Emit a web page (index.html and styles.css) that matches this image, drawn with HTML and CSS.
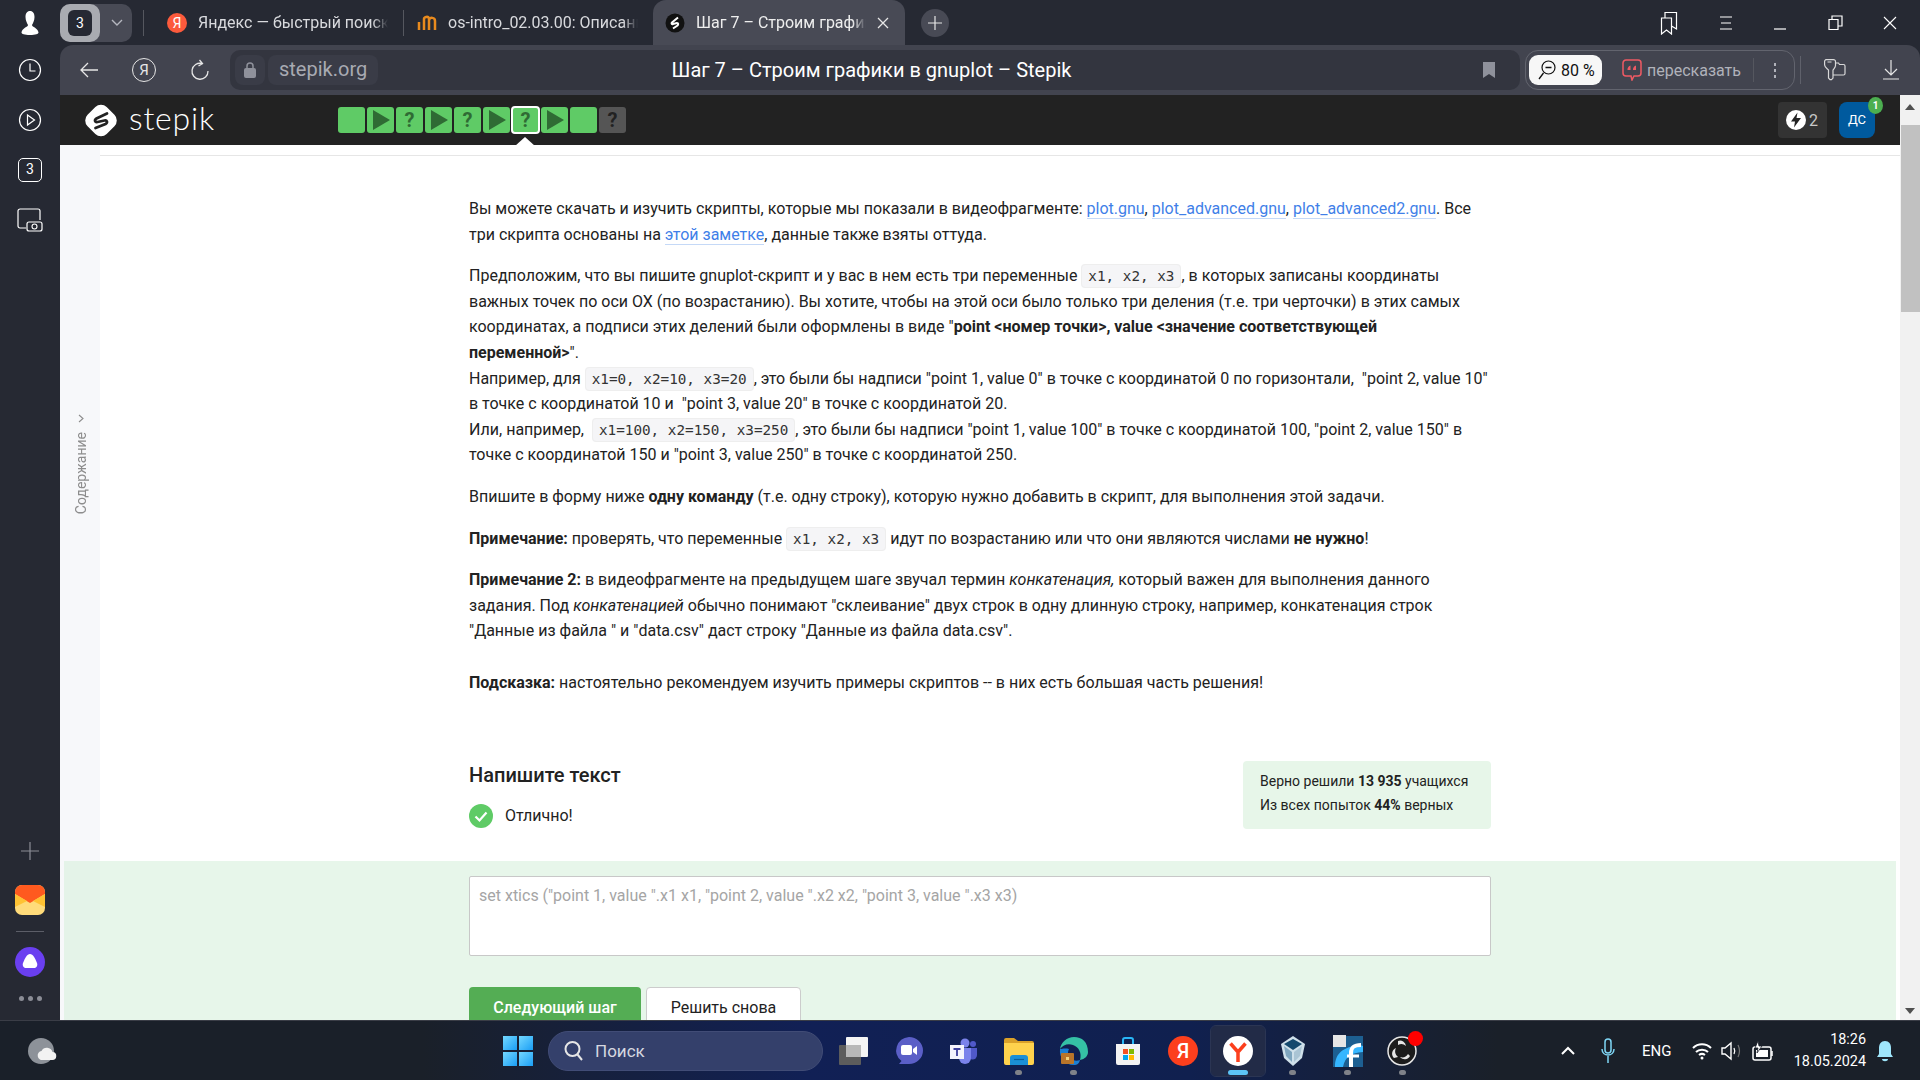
FILE: index.html
```html
<!DOCTYPE html>
<html lang="ru">
<head>
    <meta charset="UTF-8">
    <title>Шаг 7 – Строим графики в gnuplot – Stepik</title>
    <link rel="stylesheet" href="styles.css">
</head>
<body>
    <!-- Tabs -->
    <div class="tabbar">
        <div class="profile">
            <svg width="20" height="26" viewBox="0 0 20 26"><path d="M10 1c3 0 4.500 2.500 4.500 6 0 3.500-1.500 6-2.500 8 0 2 6 3 6.500 7.500 0 1.500-3 2.500-8.500 2.500s-8.500-1-8.500-2.500C2 18 8 17 8 15 7 13 5.500 10.500 5.500 7 5.500 3.500 7 1 10 1z" fill="#fff"/></svg>
        </div>
        <div class="tab-group">
            <span class="tab-group-num"><b>3</b></span>
            <svg width="12" height="8" viewBox="0 0 12 8"><path d="M1 1l5 5 5-5" fill="none" stroke="#b5b7bf" stroke-width="1.400"/></svg>
        </div>
        <span class="tab-sep first"></span>
        <div class="tab">
            <span class="fav-ya">Я</span>
            <span class="tab-title">Яндекс — быстрый поиск</span>
        </div>
        <span class="tab-sep"></span>
        <div class="tab">
            <svg class="fav" width="20" height="16" viewBox="0 0 20 16"><path d="M2 15V7M7 15V4c0-2 4-3 5-1l0 12M12 5c1-3 6-3 6 1v9" fill="none" stroke="#e88a1e" stroke-width="2.500"/></svg>
            <span class="tab-title">os-intro_02.03.00: Описание</span>
        </div>
        <div class="tab active">
            <svg class="fav" width="20" height="20" viewBox="0 0 20 20"><circle cx="10" cy="10" r="9.500" fill="#111"/><path d="M13 4.500L7 9.500c-1 1 0 2 1 1.500l4-1c1.500 0 1.500 1.500.5 2.500L8 15.500" fill="none" stroke="#fff" stroke-width="2"/></svg>
            <span class="tab-title">Шаг 7 – Строим графики в gnuplot</span>
            <svg width="12" height="12" viewBox="0 0 12 12"><path d="M1 1l10 10M11 1L1 11" stroke="#e6e6e6" stroke-width="1.300"/></svg>
        </div>
        <span class="tab-new">
            <svg width="14" height="14" viewBox="0 0 14 14"><path d="M7 0v14M0 7h14" stroke="#e6e6e6" stroke-width="1.200"/></svg>
        </span>
        <div class="win-controls">
            <svg width="18" height="24" viewBox="0 0 18 24"><path d="M1.500 7h10v16l-5-4-5 4zM5 7V1.500h11.500V18L11.500 15" fill="none" stroke="#fff" stroke-width="1.200"/></svg>
            <svg width="14" height="14" viewBox="0 0 14 14"><path d="M1 1h12M2 7h10M1 13h12" stroke="#fff" stroke-width="1.200"/></svg>
            <svg width="14" height="14" viewBox="0 0 14 14"><path d="M1 13h12" stroke="#fff" stroke-width="1.200"/></svg>
            <svg width="15" height="15" viewBox="0 0 15 15"><path d="M1 4.500h9v10H1zM4 4.500V1h10v10h-4" fill="none" stroke="#fff" stroke-width="1.200"/></svg>
            <svg width="14" height="14" viewBox="0 0 14 14"><path d="M1 1l12 12M13 1L1 13" stroke="#fff" stroke-width="1.100"/></svg>
        </div>
    </div>

    <div class="browser">
        <!-- Sidebar of the browser -->
        <aside class="sidebar">
            <div class="side-top">
                <svg width="24" height="24" viewBox="0 0 24 24"><circle cx="12" cy="12" r="10.500" fill="none" stroke="#fff" stroke-width="1.200"/><path d="M12 5.500V13h5.500" fill="none" stroke="#fff" stroke-width="1.200"/></svg>
                <svg width="24" height="24" viewBox="0 0 24 24"><circle cx="12" cy="12" r="10.500" fill="none" stroke="#fff" stroke-width="1.200"/><path d="M9.500 7l7 5-7 5z" fill="none" stroke="#fff" stroke-width="1.200"/></svg>
                <span class="side-three">3</span>
                <svg width="26" height="24" viewBox="0 0 26 24"><path d="M9 20H3a2 2 0 0 1-2-2V3a2 2 0 0 1 2-2h18a2 2 0 0 1 2 2v9" fill="none" stroke="#fff" stroke-width="1.200"/><rect x="10" y="14" width="15" height="9" rx="2" fill="none" stroke="#fff" stroke-width="1.200"/><circle cx="17.500" cy="18.500" r="2.500" fill="none" stroke="#fff" stroke-width="1.100"/></svg>
            </div>
            <div class="side-bottom">
                <svg width="20" height="20" viewBox="0 0 20 20"><path d="M10 1v18M1 10h18" stroke="#8b8d96" stroke-width="1.200"/></svg>
                <svg class="side-mail" width="30" height="30" viewBox="0 0 30 30"><rect width="30" height="30" rx="7" fill="#ffdb7a"/><path d="M0 7a7 7 0 0 1 7-7h16a7 7 0 0 1 7 7v2l-15 9L0 9z" fill="#ff5a1f"/><path d="M0 9l12 7-12 6zM30 9l-12 7 12 6z" fill="#ffc233"/></svg>
                <span class="side-line"></span>
                <svg width="30" height="30" viewBox="0 0 30 30"><circle cx="15" cy="15" r="15" fill="#6a3ff0"/><path d="M15 7c3 0 5 4 7 9 1 3-1 5-3 5h-8c-2 0-4-2-3-5 2-5 4-9 7-9z" fill="#fff"/></svg>
                <span class="side-dots"><i></i><i></i><i></i></span>
            </div>
        </aside>

        <div class="window">
            <!-- Address bar -->
            <div class="addressbar">
                <div class="nav-icons">
                    <svg width="18" height="16" viewBox="0 0 18 16"><path d="M8 1L1 8l7 7M1 8h17" fill="none" stroke="#e6e6e6" stroke-width="1.300"/></svg>
                    <span class="ya-circle">Я</span>
                    <svg width="20" height="22" viewBox="0 0 20 22"><path d="M12 4.500A8 8 0 1 0 18 12M9.500 1l3 3.500-4 2.500" fill="none" stroke="#e6e6e6" stroke-width="1.300"/></svg>
                </div>
                <div class="url-field">
                    <div class="url-left">
                        <span class="url-chip lock">
                            <svg width="12" height="16" viewBox="0 0 12 16"><rect y="6" width="12" height="10" rx="2" fill="#8f919b"/><path d="M3 7V4a3 3 0 0 1 6 0v3" fill="none" stroke="#8f919b" stroke-width="1.500"/></svg>
                        </span>
                        <span class="url-chip">stepik.org</span>
                    </div>
                    <span class="page-title">Шаг 7 – Строим графики в gnuplot – Stepik</span>
                    <svg class="bookmark" width="14" height="18" viewBox="0 0 14 18"><path d="M1 1h12v16l-6-4-6 4z" fill="#8f919b"/></svg>
                </div>
                <div class="tools">
                    <span class="zoom-pill">
                        <svg width="18" height="20" viewBox="0 0 18 20"><circle cx="10.500" cy="7.500" r="6.500" fill="none" stroke="#111" stroke-width="1.200"/><path d="M7.500 7.500h6M5.500 13L1 19" stroke="#111" stroke-width="1.300"/></svg>
                        80 %
                    </span>
                    <span class="retell">
                        <svg width="20" height="22" viewBox="0 0 20 22"><path d="M4 1h12a3 3 0 0 1 3 3v10a3 3 0 0 1-3 3h-4l-2 4-1-4H4a3 3 0 0 1-3-3V4a3 3 0 0 1 3-3z" fill="none" stroke="#ef5a64" stroke-width="1.500"/><path d="M5.500 11c0-2 .5-3.500 3-4.500v4.500zM11 11c0-2 .5-3.500 3-4.500v4.500z" fill="#ef5a64"/></svg>
                        пересказать
                    </span>
                    <span class="tools-sep"></span>
                    <span class="tools-more"><i></i><i></i><i></i></span>
                </div>
                <span class="bar-sep"></span>
                <svg class="bar-key" width="22" height="22" viewBox="0 0 22 22"><path d="M2.500.6h7a2 2 0 0 1 2 2v4c0 2-1.500 3-2.500 4.500v8l-1.500 1.500H6L4.500 19v-8C3 9.500.6 8 .6 6V2.500a2 2 0 0 1 2-2zM3.500 3h4M11.500 4h3l1 1.500h4a1.500 1.500 0 0 1 1.500 1.500v7.500a1.500 1.500 0 0 1-1.500 1.500H9" fill="none" stroke="#d9d9d9" stroke-width="1.200"/></svg>
                <svg class="bar-download" width="16" height="20" viewBox="0 0 16 20"><path d="M8 0v15M2 9l6 6 6-6M0 19h16" fill="none" stroke="#e6e6e6" stroke-width="1.200"/></svg>
            </div>

            <div class="site">
                <div class="site-main">
                    <!-- Stepik header -->
                    <header class="st-header">
                        <div class="st-logo">
                            <svg width="32" height="33" viewBox="0 0 32 33"><rect x="2.500" y="3" width="27" height="27" rx="8" fill="#fff" transform="rotate(45 16 16.500)"/><path d="M22 9.500L11.500 14.500c-2.500 1.500-1.500 4 1 3.500l7-1.500c2.500-.5 3.500 2 1 3.500L10.500 24" fill="none" stroke="#222" stroke-width="2.800" stroke-linecap="round"/></svg>
                            <span class="st-logo-name">stepik</span>
                        </div>
                        <nav class="steps">
                            <span class="step"></span>
                            <span class="step"><i class="play"></i></span>
                            <span class="step">?</span>
                            <span class="step"><i class="play"></i></span>
                            <span class="step">?</span>
                            <span class="step"><i class="play"></i></span>
                            <span class="step current">?</span>
                            <span class="step"><i class="play"></i></span>
                            <span class="step"></span>
                            <span class="step todo">?</span>
                        </nav>
                        <div class="st-user">
                            <span class="streak">
                                <svg width="20" height="20" viewBox="0 0 20 20"><circle cx="10" cy="10" r="10" fill="#fff"/><path d="M11.500 2.500L5 11.500h4l-1 6 7-9.500h-4.500z" fill="#222"/></svg>
                                2
                            </span>
                            <span class="avatar">ДС<b class="avatar-badge">1</b></span>
                        </div>
                    </header>

                    <div class="viewport">
                        <div class="toc-strip">
                            <span class="toc-label">Содержание</span>
                            <svg class="toc-arrow" width="6" height="9" viewBox="0 0 6 9"><path d="M1 1l4 3.500L1 8" fill="none" stroke="#8d8d8d" stroke-width="1.100"/></svg>
                        </div>

                        <main class="lesson">
                            <article class="lesson-text">
                                <p>Вы можете скачать и изучить скрипты, которые мы показали в видеофрагменте: <a href="#">plot.gnu</a>, <a href="#">plot_advanced.gnu</a>, <a href="#">plot_advanced2.gnu</a>. Все три скрипта основаны на <a href="#">этой заметке</a>, данные также взяты оттуда.</p>
                                <p>Предположим, что вы пишите gnuplot-скрипт и у вас в нем есть три переменные <code>x1, x2, x3</code>, в которых записаны координаты важных точек по оси ОХ (по возрастанию). Вы хотите, чтобы на этой оси было только три деления (т.е. три черточки) в этих самых координатах, а подписи этих делений были оформлены в виде "<b>point &lt;номер точки&gt;, value &lt;значение соответствующей переменной&gt;</b>".<br>
                                Например, для <code>x1=0, x2=10, x3=20</code>, это были бы надписи "point 1, value 0" в точке с координатой 0 по горизонтали,&nbsp; "point 2, value 10" в точке с координатой 10 и&nbsp; "point 3, value 20" в точке с координатой 20.<br>
                                Или, например,&nbsp; <code>x1=100, x2=150, x3=250</code>, это были бы надписи "point 1, value 100" в точке с координатой 100, "point 2, value 150" в точке с координатой 150 и "point 3, value 250" в точке с координатой 250.</p>
                                <p>Впишите в форму ниже <b>одну команду</b> (т.е. одну строку), которую нужно добавить в скрипт, для выполнения этой задачи.</p>
                                <p><b>Примечание:</b> проверять, что переменные <code>x1, x2, x3</code> идут по возрастанию или что они являются числами <b>не нужно</b>!</p>
                                <p class="note-two"><b>Примечание 2:</b> в видеофрагменте на предыдущем шаге звучал термин <i>конкатенация,</i> который важен для выполнения данного задания. Под <i>конкатенацией</i> обычно понимают "склеивание" двух строк в одну длинную строку, например, конкатенация строк "Данные из файла " и "data.csv" даст строку "Данные из файла data.csv".</p>
                                <p><b>Подсказка:</b> настоятельно рекомендуем изучить примеры скриптов -- в них есть большая часть решения!</p>
                            </article>

                            <section class="quiz-head">
                                <div>
                                    <h2>Напишите текст</h2>
                                    <div class="quiz-ok">
                                        <svg width="24" height="24" viewBox="0 0 24 24"><circle cx="12" cy="12" r="12" fill="#5fcb66"/><path d="M6.500 12.500l4 4 7-8" fill="none" stroke="#fff" stroke-width="2.200"/></svg>
                                        Отлично!
                                    </div>
                                </div>
                                <div class="quiz-stats">
                                    <div>Верно решили <b>13 935</b> учащихся</div>
                                    <div>Из всех попыток <b>44%</b> верных</div>
                                </div>
                            </section>

                            <section class="answer">
                                <div class="answer-box">set xtics ("point 1, value ".x1 x1, "point 2, value ".x2 x2, "point 3, value ".x3 x3)</div>
                                <div class="answer-actions">
                                    <button class="btn btn-next">Следующий шаг</button>
                                    <button class="btn btn-again">Решить снова</button>
                                </div>
                            </section>
                        </main>
                    </div>
                </div>

                <div class="scrollbar">
                    <i class="arrow-up"></i>
                    <span class="thumb"></span>
                    <i class="arrow-down"></i>
                </div>
            </div>
        </div>
    </div>

    <!-- Windows taskbar -->
    <footer class="taskbar">
        <svg class="weather" width="30" height="26" viewBox="0 0 30 26"><circle cx="14" cy="13" r="13" fill="#8d9299"/><path d="M16 22h9a4 4 0 0 0 .5-8 6 6 0 0 0-11-1 4.500 4.500 0 0 0 1.500 9z" fill="#f2f2f2"/></svg>
        <div class="win-logo"><i></i><i></i><i></i><i></i></div>
        <div class="search">
            <svg width="20" height="22" viewBox="0 0 20 22"><circle cx="8.500" cy="9" r="7" fill="none" stroke="#e6e6e6" stroke-width="2"/><path d="M13.500 14.500L18 20" stroke="#e6e6e6" stroke-width="2"/></svg>
            Поиск
        </div>
        <div class="apps">
            <span class="app">
                <svg width="30" height="30" viewBox="0 0 30 30"><rect y="9" width="22" height="20" rx="1" fill="#5c5c5c"/><rect x="7" y="1" width="22" height="20" rx="1" fill="#f4f4f4"/><rect x="7" y="9" width="15" height="12" fill="#b8b8b8"/></svg>
            </span>
            <span class="app">
                <svg width="30" height="30" viewBox="0 0 30 30"><path d="M15 1a14 13.500 0 0 1 0 27H5l2.500-3A14 13.500 0 0 1 15 1z" fill="#5b5fc7"/><rect x="7" y="9" width="11" height="10" rx="2" fill="#fff"/><path d="M19 13l4-3v9l-4-3z" fill="#fff"/></svg>
            </span>
            <span class="app">
                <svg width="28" height="26" viewBox="0 0 28 26"><circle cx="15" cy="5" r="4.500" fill="#7b83eb"/><circle cx="23" cy="6" r="3" fill="#5059c9"/><path d="M18 10h9v7a4.500 4.500 0 0 1-9 0z" fill="#5059c9"/><path d="M9 10h12v10a6 6 0 0 1-12 0z" fill="#7b83eb"/><rect y="7" width="14" height="14" fill="#f4f4fc"/><path d="M3.500 11h7M7 11v7" stroke="#3d3f9c" stroke-width="1.800"/></svg>
            </span>
            <span class="app dot">
                <svg width="30" height="28" viewBox="0 0 30 28"><path d="M0 3a2 2 0 0 1 2-2h8l4 3h14a2 2 0 0 1 2 2v4H0z" fill="#dba129"/><path d="M0 6h30v20a2 2 0 0 1-2 2H2a2 2 0 0 1-2-2z" fill="#ffd24d"/><path d="M6 21a3 3 0 0 1 3-3h12a3 3 0 0 1 3 3v7H6z" fill="#1a8fd6"/><path d="M10 22.500h10" stroke="#0b5f9c" stroke-width="1.200"/></svg>
            </span>
            <span class="app dot">
                <svg width="30" height="30" viewBox="0 0 30 30"><path d="M29 16C29 6 23 1 15 1 8 1 2 6 1 13c3-4 8-6 13-4 6 2 9 8 7 15 5-1 8-4 8-8z" fill="#35c1a5"/><path d="M1 13c-1 9 5 16 14 16 3 0 5-1 6-5-3 1-6 1-9-1-3-2-4-6-2-10-4-1-7 0-9 0z" fill="#1a7fd4"/><rect x="2" y="17" width="13" height="11" rx="1" fill="#b9752a"/><rect x="7" y="21" width="3" height="3" fill="#f3d27a"/></svg>
            </span>
            <span class="app">
                <svg width="30" height="30" viewBox="0 0 30 30"><path d="M3 8h24v19a2 2 0 0 1-2 2H5a2 2 0 0 1-2-2z" fill="#f3f3f3"/><path d="M10 8V4a2 2 0 0 1 2-2h6a2 2 0 0 1 2 2v4" fill="none" stroke="#29b6f6" stroke-width="2"/><rect x="10" y="13" width="5" height="5" fill="#f25022"/><rect x="16" y="13" width="5" height="5" fill="#7fba00"/><rect x="10" y="19" width="5" height="5" fill="#00a4ef"/><rect x="16" y="19" width="5" height="5" fill="#ffb900"/></svg>
            </span>
            <span class="app"><span class="app-ya">Я</span></span>
            <span class="app app-active">
                <svg width="30" height="30" viewBox="0 0 30 30"><circle cx="15" cy="15" r="15" fill="#fff"/><path d="M7.500 7.500L15 16l7.500-8.500M15 16v10" fill="none" stroke="#fc3f1d" stroke-width="3.500"/></svg>
            </span>
            <span class="app dot">
                <svg width="26" height="32" viewBox="0 0 26 32"><path d="M13 1L25 9l-3 14-9 8-9-8L1 9z" fill="#cfe0ea"/><path d="M13 4L22 9l-9 6-9-6z" fill="#14496e"/><path d="M4 11l8 6v10L6 21z" fill="#7fa6bf"/><path d="M22 11l-8 6v10l6-6z" fill="#aac4d4"/></svg>
            </span>
            <span class="app dot">
                <svg width="30" height="32" viewBox="0 0 30 32"><rect y="1" width="30" height="31" fill="#1d5f91"/><rect width="13" height="12" fill="#e6e6e6"/><path d="M2 32c0-14 8-20 25-22l3 1v6C18 18 12 22 10 32z" fill="#35b6ff"/><path d="M18 32V18c0-6 3-8 10-8" fill="none" stroke="#fff" stroke-width="4"/><path d="M14 21h12" stroke="#fff" stroke-width="3"/></svg>
            </span>
            <span class="app dot app-obs">
                <svg width="30" height="30" viewBox="0 0 30 30"><circle cx="15" cy="15" r="14" fill="#1c1c1c" stroke="#e6e6e6" stroke-width="1.500"/><path d="M11 5a6 6 0 0 1 8 5 7 7 0 0 0-8-1zM7 22a6 6 0 0 1 2-10 7 7 0 0 0 2 9zM23 20a6 6 0 0 1-10 1 7 7 0 0 0 8-3z" fill="#e6e6e6"/></svg>
                <i class="obs-badge"></i>
            </span>
        </div>
        <div class="tray">
            <svg class="tray-chevron" width="16" height="10" viewBox="0 0 16 10"><path d="M2 8l6-6 6 6" fill="none" stroke="#fff" stroke-width="2"/></svg>
            <svg class="tray-mic" width="14" height="26" viewBox="0 0 14 26"><rect x="4" y="1" width="6" height="14" rx="3" fill="none" stroke="#7fd6f5" stroke-width="1.500"/><path d="M1 11c0 8 12 8 12 0M7 18v7" fill="none" stroke="#7fd6f5" stroke-width="1.500"/></svg>
            <span class="tray-lang">ENG</span>
            <svg class="tray-wifi" width="20" height="18" viewBox="0 0 20 18"><path d="M1 6c5-5 13-5 18 0M4 10c3-3 9-3 12 0M7 13c2-1.500 4-1.500 6 0" fill="none" stroke="#fff" stroke-width="2"/><circle cx="10" cy="16" r="1.500" fill="#fff"/></svg>
            <svg class="tray-sound" width="22" height="20" viewBox="0 0 22 20"><path d="M1 7h3l6-5v16l-6-5H1z" fill="none" stroke="#fff" stroke-width="1.400"/><path d="M13 7c1 2 1 4 0 6" fill="none" stroke="#fff" stroke-width="1.300"/><path d="M17 4c2 4 2 8 0 12" fill="none" stroke="#777" stroke-width="1.200"/></svg>
            <svg class="tray-battery" width="22" height="22" viewBox="0 0 22 22"><rect x="1" y="7" width="18" height="13" rx="2" fill="none" stroke="#fff" stroke-width="1.500"/><rect x="4" y="10" width="12" height="7" fill="#fff"/><path d="M20 11v5" stroke="#fff" stroke-width="1.500"/><path d="M6 1L3 8h3l-1 5 5-7H7z" fill="#fff" stroke="#1a2029" stroke-width=".8"/></svg>
            <div class="clock">
                <div>18:26</div>
                <div>18.05.2024</div>
            </div>
            <svg class="tray-bell" width="18" height="22" viewBox="0 0 18 22"><path d="M9 1c4 0 6 3 6 7v6l2 3H1l2-3V8c0-4 2-7 6-7z" fill="#9fe6fb"/><path d="M6 19h6c0 3-6 3-6 0z" fill="#9fe6fb"/></svg>
        </div>
    </footer>
</body>
</html>
```

FILE: styles.css
```css
* {
    box-sizing: border-box;
}
html, body {
    height: 100%;
}
body {
    margin: 0;
    height: 1080px;
    width: 1920px;
    overflow: hidden;
    display: flex;
    flex-direction: column;
    background: #262933;
    font-family: Roboto, "Liberation Sans", sans-serif;
    color: #222;
}
svg {
    display: block;
    flex: none;
}

/* tabs */
.tabbar {
    height: 45px;
    flex: none;
    display: flex;
    align-items: center;
    color: #d9dade;
    font-size: 16px;
}
.profile {
    width: 60px;
    display: flex;
    justify-content: center;
}
.tab-group {
    width: 72px;
    height: 38px;
    border-radius: 10px;
    background: #484a55;
    display: flex;
    align-items: center;
    gap: 11px;
}
.tab-group-num {
    width: 40px;
    height: 38px;
    border-radius: 10px;
    background: #a9abb1;
    display: flex;
    align-items: center;
    justify-content: center;
}
.tab-group-num b {
    width: 24px;
    height: 26px;
    border-radius: 6px;
    background: #262933;
    color: #fff;
    font-size: 14px;
    font-weight: 400;
    line-height: 26px;
    text-align: center;
}
.tab-sep {
    width: 1px;
    height: 26px;
    flex: none;
    background: #55575f;
}
.tab-sep.first {
    margin: 0 10px 0 11px;
}
.tab {
    display: flex;
    align-items: center;
    flex: none;
    height: 45px;
    width: 249px;
    padding: 0 15px 0 13px;
    gap: 11px;
    overflow: hidden;
}
.tab-title {
    flex: 1;
    white-space: nowrap;
    overflow: hidden;
    -webkit-mask-image: linear-gradient(90deg, #000 92%, transparent);
    mask-image: linear-gradient(90deg, #000 92%, transparent);
}
.fav-ya {
    width: 20px;
    height: 20px;
    flex: none;
    border-radius: 50%;
    background: #fc5a3c;
    color: #fff;
    font-size: 14px;
    line-height: 20px;
    text-align: center;
}
.tab.active {
    width: 252px;
    padding: 0 16px 0 12px;
    border-radius: 13px 13px 0 0;
    background: #484a55;
    color: #eee;
}
.tab-new {
    width: 28px;
    height: 28px;
    margin-left: 16px;
    border-radius: 50%;
    background: #484a55;
    display: flex;
    align-items: center;
    justify-content: center;
}
.win-controls {
    margin-left: auto;
    width: 260px;
    padding-right: 23px;
    display: flex;
    align-items: center;
    justify-content: space-between;
}

.browser {
    flex: 1;
    min-height: 0;
    display: flex;
}

/* browser sidebar */
.sidebar {
    width: 60px;
    flex: none;
    display: flex;
    flex-direction: column;
    justify-content: space-between;
    align-items: center;
    padding: 13px 0 19px;
}
.side-top {
    display: flex;
    flex-direction: column;
    align-items: center;
    gap: 26px;
}
.side-three {
    width: 24px;
    height: 24px;
    border: 1.2px solid #fff;
    border-radius: 5px;
    color: #fff;
    font-size: 14px;
    line-height: 21px;
    text-align: center;
}
.side-bottom {
    display: flex;
    flex-direction: column;
    align-items: center;
}
.side-mail {
    margin-top: 24px;
}
.side-line {
    width: 28px;
    height: 1px;
    background: #5c5e68;
    margin: 16px 0 15px;
}
.side-dots {
    display: flex;
    gap: 4px;
    margin-top: 19px;
}
.side-dots i {
    width: 5px;
    height: 5px;
    border-radius: 50%;
    background: #8b8d96;
}

.window {
    flex: 1;
    min-width: 0;
    display: flex;
    flex-direction: column;
}

/* address bar */
.addressbar {
    height: 50px;
    flex: none;
    display: flex;
    align-items: center;
    background: #42444f;
    border-radius: 13px 13px 0 0;
}
.nav-icons {
    width: 170px;
    padding: 0 20px;
    display: flex;
    align-items: center;
    justify-content: space-between;
}
.ya-circle {
    width: 24px;
    height: 24px;
    border: 1.2px solid #e6e6e6;
    border-radius: 50%;
    color: #e6e6e6;
    font-size: 15px;
    line-height: 22px;
    text-align: center;
}
.url-field {
    width: 1290px;
    height: 40px;
    padding: 0 12px 0 5px;
    display: grid;
    grid-template-columns: 1fr auto 1fr;
    align-items: center;
    background: #33353f;
    border-radius: 10px;
}
.url-left {
    display: flex;
    align-items: center;
    gap: 3px;
}
.url-chip {
    height: 30px;
    padding: 0 11px;
    border-radius: 8px;
    background: #3a3c47;
    color: #a8aab2;
    font-size: 20px;
    line-height: 29px;
}
.url-chip.lock {
    width: 30px;
    padding: 0;
    display: flex;
    align-items: center;
    justify-content: center;
}
.page-title {
    color: #fff;
    font-size: 20px;
    white-space: nowrap;
}
.bookmark {
    justify-self: end;
    margin-right: 12px;
}
.tools {
    width: 270px;
    height: 40px;
    margin-left: 5px;
    padding: 0 12px 0 3px;
    border: 1px solid #62646e;
    border-radius: 13px;
    display: flex;
    align-items: center;
    color: #b0b2ba;
    font-size: 16px;
}
.zoom-pill {
    width: 73px;
    height: 30px;
    padding-left: 9px;
    border-radius: 9px;
    background: #f7f7f7;
    color: #111;
    display: flex;
    align-items: center;
    gap: 5px;
}
.retell {
    display: flex;
    align-items: center;
    gap: 5px;
    margin-left: 20px;
}
.tools-sep {
    width: 1px;
    height: 24px;
    background: #55575f;
    margin-left: 12px;
}
.tools-more {
    display: flex;
    flex-direction: column;
    gap: 3px;
    margin-left: 20px;
}
.tools-more i {
    width: 2px;
    height: 3px;
    background: #b0b2ba;
}
.bar-sep {
    width: 1px;
    height: 28px;
    margin-left: 5px;
    background: #5f616b;
}
.bar-key {
    margin-left: 23px;
}
.bar-download {
    margin-left: 37px;
}

.site {
    flex: 1;
    min-height: 0;
    display: flex;
}
.site-main {
    flex: 1;
    min-width: 0;
    display: flex;
    flex-direction: column;
}

/* stepik header */
.st-header {
    height: 50px;
    flex: none;
    padding-right: 25px;
    display: flex;
    align-items: center;
    background: #222;
}
.st-logo {
    width: 278px;
    padding-left: 25px;
    display: flex;
    align-items: center;
    gap: 12px;
}
.st-logo-name {
    color: #fff;
    font-family: Lato, sans-serif;
    font-size: 32px;
    font-weight: 300;
    letter-spacing: 0.8px;
    line-height: 36px;
    margin-top: -5px;
}
.steps {
    display: flex;
    gap: 2px;
}
.step {
    position: relative;
    width: 27px;
    height: 26px;
    border-radius: 3px;
    background: #5fcb66;
    color: #2f6b34;
    font-size: 20px;
    font-weight: 700;
    line-height: 26px;
    text-align: center;
}
.play {
    position: absolute;
    left: 6px;
    top: 3px;
    border-left: 17px solid #2f6b34;
    border-top: 10px solid transparent;
    border-bottom: 10px solid transparent;
}
.step.current {
    outline: 2px solid #fff;
    outline-offset: -1px;
}
.step.current::after {
    content: '';
    position: absolute;
    left: 3px;
    top: 30px;
    border-left: 10px solid transparent;
    border-right: 10px solid transparent;
    border-bottom: 9px solid #fff;
}
.step.todo {
    background: #555;
    color: #222;
}
.st-user {
    margin-left: auto;
    display: flex;
    align-items: center;
    gap: 12px;
}
.streak {
    width: 49px;
    height: 36px;
    padding-left: 8px;
    border-radius: 4px;
    background: #333;
    color: #c8c8c8;
    font-size: 16px;
    display: flex;
    align-items: center;
    gap: 3px;
}
.avatar {
    position: relative;
    width: 36px;
    height: 36px;
    border-radius: 8px;
    background: #005a9e;
    color: #fff;
    font-size: 13px;
    line-height: 36px;
    text-align: center;
}
.avatar-badge {
    position: absolute;
    top: -5px;
    right: -8px;
    width: 15px;
    height: 17px;
    border-radius: 50%;
    background: #4caf50;
    font-size: 10px;
    line-height: 17px;
}

/* page */
.viewport {
    flex: 1;
    min-height: 0;
    display: flex;
    overflow: hidden;
    background: #fff;
}
.toc-strip {
    width: 40px;
    flex: none;
    background: #f7f8fa;
    position: relative;
}
.toc-label {
    position: absolute;
    left: 14px;
    top: 287px;
    writing-mode: vertical-rl;
    transform: rotate(180deg);
    color: #8d8d8d;
    font-size: 14px;
    line-height: 14px;
}
.toc-arrow {
    position: absolute;
    left: 18px;
    top: 269px;
}
.lesson {
    flex: 1;
    min-width: 0;
    padding-top: 10px;
}
.lesson-text {
    border-top: 1px solid #e6e6e6;
    padding: 40px 411px 0 369px;
    font-size: 16px;
    line-height: 25.6px;
}
.lesson-text p {
    margin: 0 0 16px;
}
.lesson-text .note-two {
    margin-bottom: 26px;
}
.lesson-text a {
    color: #3f7fe8;
    text-decoration: none;
    border-bottom: 1px solid #c5d9f7;
}
.lesson-text code {
    padding: 3px 6px;
    border: 1px solid #eee;
    border-radius: 4px;
    background: #f5f5f7;
    color: #333;
    font-family: "DejaVu Sans Mono", monospace;
    font-size: 14.300px;
    line-height: 1;
}
.quiz-head {
    margin-top: 65px;
    padding: 0 409px 0 369px;
    display: flex;
    justify-content: space-between;
}
.quiz-head h2 {
    margin: 0;
    font-size: 20px;
    font-weight: 500;
    line-height: 28px;
}
.quiz-ok {
    margin-top: 15px;
    display: flex;
    align-items: center;
    gap: 12px;
    font-size: 16px;
}
.quiz-stats {
    width: 248px;
    height: 68px;
    padding: 8px 17px;
    border-radius: 4px;
    background: #e7f6e9;
    font-size: 14px;
    line-height: 24.500px;
}
.answer {
    margin: 32px 4px 0 -36px;
    padding: 15px 405px 0 405px;
    height: 200px;
    background: rgba(215, 240, 220, 0.6);
    position: relative;
}
.answer-box {
    height: 80px;
    padding: 9px;
    border: 1px solid #c8c8c8;
    border-radius: 2px;
    background: #fff;
    color: #a5a5a5;
    font-size: 16px;
    line-height: 20px;
}
.answer-actions {
    margin-top: 31px;
    display: flex;
    gap: 5px;
}
.btn {
    height: 42px;
    border-radius: 4px;
    font-family: inherit;
    font-size: 16px;
    padding: 0;
}
.btn-next {
    width: 172px;
    border: none;
    background: #54ad54;
    color: #fff;
    font-weight: 500;
}
.btn-again {
    width: 155px;
    border: 1px solid #ccc;
    background: #fff;
    color: #222;
}
.scrollbar {
    width: 20px;
    flex: none;
    background: #f1f1f1;
    position: relative;
}
.thumb {
    display: block;
    height: 187px;
    margin: 30px 0 0 1px;
    background: #c1c1c1;
}
.arrow-up, .arrow-down {
    position: absolute;
    left: 5px;
    border-left: 5px solid transparent;
    border-right: 5px solid transparent;
}
.arrow-up {
    top: 9px;
    border-bottom: 6px solid #505050;
}
.arrow-down {
    bottom: 6px;
    border-top: 6px solid #505050;
}

/* taskbar */
.taskbar {
    height: 60px;
    flex: none;
    display: flex;
    align-items: center;
    border-top: 1px solid #3a3d46;
    background: linear-gradient(90deg, #1a2029 0, #1a2029 22%, #112055 42%, #10204f 62%, #1a2029 78%, #1a2029 100%);
    color: #fff;
}
.weather {
    margin-left: 27px;
}
.win-logo {
    width: 30px;
    height: 30px;
    margin-left: 446px;
    display: grid;
    grid-template-columns: 1fr 1fr;
    gap: 2px;
}
.win-logo i {
    background: linear-gradient(135deg, #74d8ff, #1a9ef5);
}
.search {
    width: 275px;
    height: 40px;
    margin-left: 15px;
    padding-left: 15px;
    border: 1px solid #414c76;
    border-radius: 20px;
    background: #34406b;
    color: #d6d8e0;
    font-size: 17px;
    display: flex;
    align-items: center;
    gap: 11px;
}
.apps {
    margin-left: 4px;
    display: flex;
}
.app {
    position: relative;
    width: 54.800px;
    height: 50px;
    display: flex;
    align-items: center;
    justify-content: center;
}
.app.dot::after {
    content: '';
    position: absolute;
    bottom: 1px;
    left: 24px;
    width: 7px;
    height: 5px;
    border-radius: 3px;
    background: #7f8289;
}
.app-active {
    border-radius: 5px;
    background: #222b47;
    outline: 1px solid #2b3553;
}
.app-active::after {
    content: '';
    position: absolute;
    bottom: 1px;
    left: 17px;
    width: 20px;
    height: 5px;
    border-radius: 3px;
    background: #5cc4f7;
}
.app-ya {
    width: 30px;
    height: 30px;
    border-radius: 50%;
    background: #fc3f1d;
    color: #fff;
    font-size: 20px;
    font-weight: 500;
    line-height: 30px;
    text-align: center;
}
.obs-badge {
    position: absolute;
    top: 5px;
    right: 7px;
    width: 15px;
    height: 15px;
    border-radius: 50%;
    background: #f00;
}
.tray {
    margin-left: auto;
    width: 360px;
    padding-right: 26px;
    display: flex;
    align-items: center;
}
.tray-mic {
    margin-left: 25px;
}
.tray-lang {
    margin-left: 27px;
    font-size: 15px;
}
.tray-wifi {
    margin-left: 21px;
}
.tray-sound {
    margin-left: 9px;
}
.tray-battery {
    margin-left: 9px;
}
.clock {
    margin-left: auto;
    text-align: right;
    font-size: 14.400px;
    line-height: 22px;
}
.tray-bell {
    margin-left: 10px;
}
```
